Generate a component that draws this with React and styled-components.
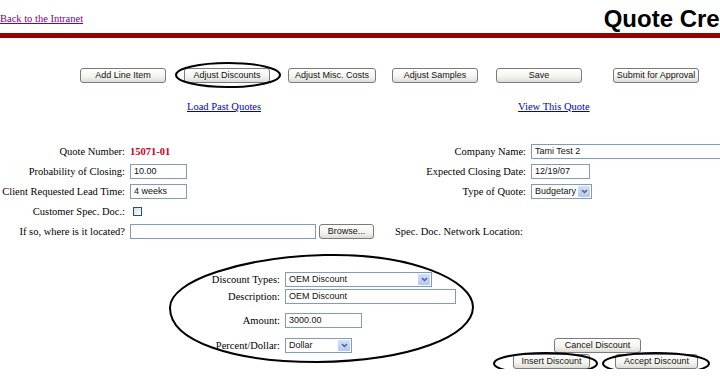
import React from 'react';
import styled, { createGlobalStyle } from 'styled-components';

//? Global page styles
const GlobalStyle = createGlobalStyle`
  body {
    margin: 0;
    background: #fff;
    overflow: hidden;
  }
`;

const Page = styled.div`
  position: relative;
  width: 777px;
  font-family: "Liberation Serif", "Times New Roman", serif;
  font-size: 10.5px;
  color: #000;
`;

const Header = styled.div`
  display: flex;
  justify-content: space-between;
  align-items: flex-start;
  height: 33px;
  padding-top: 5px;
  box-sizing: border-box;
`;

const BackLink = styled.a`
  margin-top: 7px;
  line-height: 13px;
  color: #800080;
  text-decoration: underline;
`;

const Title = styled.h1`
  margin: 0;
  font-family: "Liberation Sans", Arial, sans-serif;
  font-size: 24px;
  line-height: 28px;
  font-weight: bold;
  white-space: nowrap;
`;

const RedBar = styled.div`
  height: 5px;
  width: 100%;
  background: #9b0000;
`;

const ButtonRow = styled.div`
  display: flex;
  gap: 18px;
  margin-top: 30px;
  padding-left: 80px;
`;

const Button = styled.button`
  width: ${(p) => p.$w || 86}px;
  height: 15px;
  margin-left: ${(p) => p.$push || 0}px;
  padding: 0;
  border: 1px solid #7b7b7b;
  border-radius: 3px;
  background: linear-gradient(#ffffff, #f3f3ef 60%, #dedbd3);
  font-family: "Liberation Sans", Arial, sans-serif;
  font-size: 9px;
  line-height: 13px;
  color: #111;
  white-space: nowrap;
  box-sizing: border-box;
`;

const LinkRow = styled.div`
  display: flex;
  gap: 257px;
  margin-top: 17px;
  padding-left: 187px;
`;

const BlueLink = styled.a`
  line-height: 13px;
  color: #0000d0;
  text-decoration: underline;
`;

const FormGrid = styled.div`
  display: grid;
  grid-template-columns: 125px 260px 131px 1fr;
  grid-auto-rows: 20px;
  column-gap: 5px;
  align-items: center;
  margin-top: 28px;
`;

const Label = styled.span`
  text-align: ${(p) => (p.$left ? 'left' : 'right')};
  white-space: nowrap;
`;

const Cell = styled.div`
  display: flex;
  align-items: center;
  gap: 3px;
  min-width: 0;
`;

const QuoteNumber = styled.span`
  color: #d0001c;
  font-weight: bold;
  font-size: 10.5px;
`;

const Input = styled.div`
  width: ${(p) => p.$w}px;
  height: 15px;
  flex-shrink: 0;
  border: 1px solid #7f9db9;
  background: #fff;
  padding-left: 3px;
  box-sizing: border-box;
  font-family: "Liberation Sans", Arial, sans-serif;
  font-size: 9px;
  line-height: 13px;
  color: #111;
  white-space: nowrap;
  overflow: hidden;
`;

const Select = styled(Input)`
  display: flex;
  justify-content: space-between;
  padding-right: 1px;
`;

const DropButton = styled.span`
  display: flex;
  align-items: center;
  justify-content: center;
  width: 12px;
  margin: 1px 0;
  border-radius: 1px;
  background: linear-gradient(#d4e1fb, #b3c6f3);
  color: #4d5f8a;
`;

const CheckBox = styled.span`
  width: 9px;
  height: 9px;
  margin-left: 3px;
  border: 1px solid #1c5180;
  background: linear-gradient(135deg, #dcdcd7, #fff);
  box-sizing: border-box;
`;

const DiscountArea = styled.div`
  display: flex;
  align-items: flex-start;
  margin-top: 30px;
`;

const DiscountGrid = styled.div`
  display: grid;
  grid-template-columns: 280px 195px;
  grid-template-rows: 16px 19px 29px 21px;
  column-gap: 5px;
  align-items: center;
`;

const DiscountActions = styled.div`
  display: flex;
  flex-direction: column;
  align-items: flex-start;
  gap: 1px;
  margin-top: 67px;
  margin-left: 33px;
`;

const ActionPair = styled.div`
  display: flex;
  gap: 25px;
`;

// hand-drawn marks sit on top of the form
const Oval = styled.svg`
  position: absolute;
  left: ${(p) => p.$x}px;
  top: ${(p) => p.$y}px;
  overflow: visible;
  pointer-events: none;
`;

function Chevron() {
  return (
    <svg width="7" height="5" viewBox="0 0 7 5">
      <path d="M1 1 L3.5 3.5 L6 1" fill="none" stroke="currentColor" strokeWidth="1.5" />
    </svg>
  );
}

function DropDown({ w, value }) {
  return (
    <Select $w={w}>
      <span>{value}</span>
      <DropButton>
        <Chevron />
      </DropButton>
    </Select>
  );
}

function SmallOval({ x, y, w, h }) {
  return (
    <Oval $x={x} $y={y} width={w} height={h}>
      <ellipse cx={w / 2} cy={h / 2} rx={w / 2 - 1} ry={h / 2 - 1} fill="none" stroke="#000" strokeWidth="2" />
    </Oval>
  );
}

export default function App() {
  return (
    <>
      <GlobalStyle />
      <Page>
        <Header>
          <BackLink>Back to the Intranet</BackLink>
          <Title>Quote Creation</Title>
        </Header>
        <RedBar />

        <ButtonRow>
          <Button>Add Line Item</Button>
          <Button>Adjust Discounts</Button>
          <Button $w={88}>Adjust Misc. Costs</Button>
          <Button $push={-2}>Adjust Samples</Button>
          <Button>Save</Button>
          <Button $push={13}>Submit for Approval</Button>
        </ButtonRow>

        <LinkRow>
          <BlueLink>Load Past Quotes</BlueLink>
          <BlueLink>View This Quote</BlueLink>
        </LinkRow>

        <FormGrid>
          <Label>Quote Number:</Label>
          <Cell>
            <QuoteNumber>15071-01</QuoteNumber>
          </Cell>
          <Label>Company Name:</Label>
          <Cell>
            <Input $w={220}>Tami Test 2</Input>
          </Cell>

          <Label>Probability of Closing:</Label>
          <Cell>
            <Input $w={57}>10.00</Input>
          </Cell>
          <Label>Expected Closing Date:</Label>
          <Cell>
            <Input $w={59}>12/19/07</Input>
          </Cell>

          <Label>Client Requested Lead Time:</Label>
          <Cell>
            <Input $w={57}>4 weeks</Input>
          </Cell>
          <Label>Type of Quote:</Label>
          <Cell>
            <DropDown w={61} value="Budgetary" />
          </Cell>

          <Label>Customer Spec. Doc.:</Label>
          <Cell>
            <CheckBox />
          </Cell>
          <span />
          <span />

          <Label>If so, where is it located?</Label>
          <Cell>
            <Input $w={186} />
            <Button $w={55}>Browse...</Button>
          </Cell>
          <Label $left>Spec. Doc. Network Location:</Label>
          <span />
        </FormGrid>

        <DiscountArea>
          <DiscountGrid>
            <Label>Discount Types:</Label>
            <Cell>
              <DropDown w={147} value="OEM Discount" />
            </Cell>
            <Label>Description:</Label>
            <Cell>
              <Input $w={171}>OEM Discount</Input>
            </Cell>
            <Label>Amount:</Label>
            <Cell>
              <Input $w={77}>3000.00</Input>
            </Cell>
            <Label>Percent/Dollar:</Label>
            <Cell>
              <DropDown w={67} value="Dollar" />
            </Cell>
          </DiscountGrid>

          <DiscountActions>
            <Button $w={87} $push={41}>Cancel Discount</Button>
            <ActionPair>
              <Button $w={77}>Insert Discount</Button>
              <Button $w={83}>Accept Discount</Button>
            </ActionPair>
          </DiscountActions>
        </DiscountArea>

        <SmallOval x={175} y={62} w={106} h={26} />
        <SmallOval x={493} y={352} w={105} h={23} />
        <SmallOval x={602} y={352} w={108} h={23} />
        <Oval $x={165} $y={250} width={315} height={118}>
          <path
            d="M5 58 C 4 30, 80 7, 160 5 C 245 3, 308 30, 308 57 C 308 86, 245 111, 152 112 C 70 112, 5 92, 5 58 Z"
            fill="none"
            stroke="#000"
            strokeWidth="2"
          />
        </Oval>
      </Page>
    </>
  );
}
